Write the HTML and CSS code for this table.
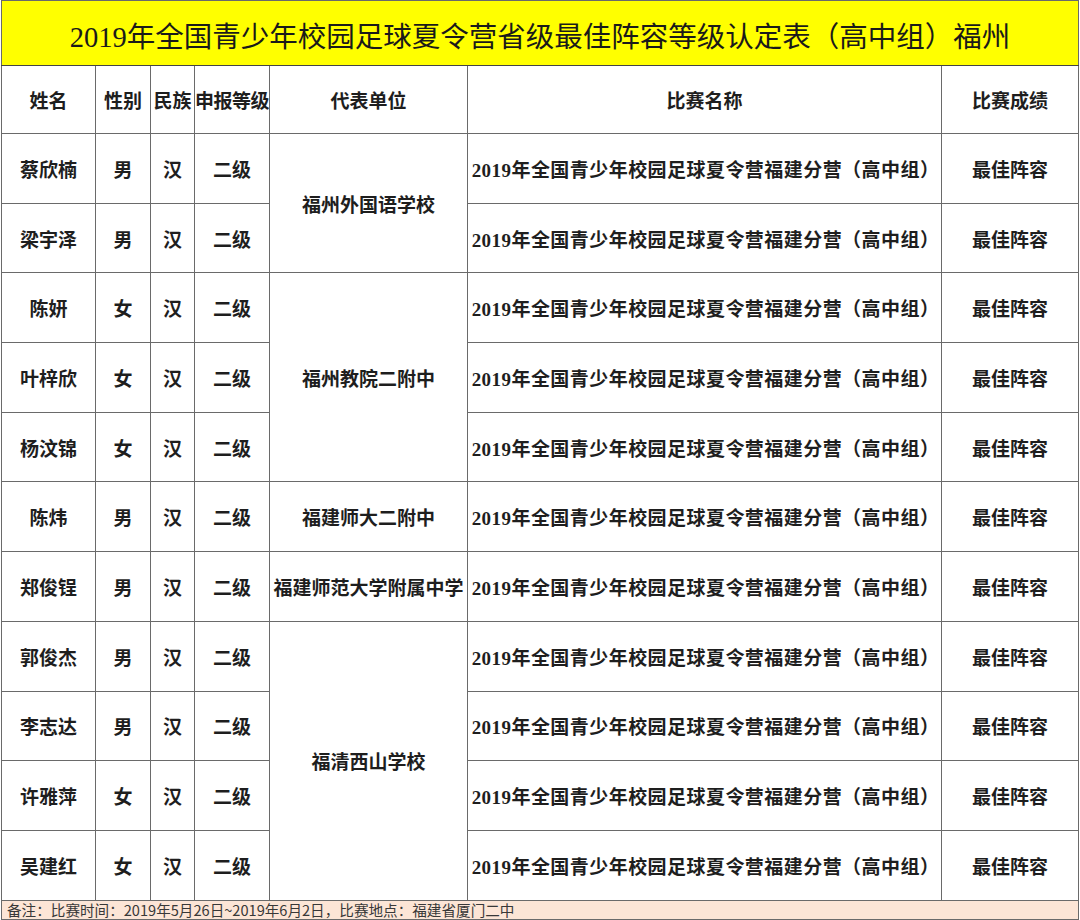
FILE: index.html
```html
<!DOCTYPE html>
<html lang="zh-CN">
<head>
<meta charset="utf-8">
<title>2019年全国青少年校园足球夏令营省级最佳阵容等级认定表（高中组）福州</title>
<link rel="stylesheet" href="styles.css">
</head>
<body>
<table class="sheet">
  <colgroup>
    <col class="c-name">
    <col class="c-sex">
    <col class="c-eth">
    <col class="c-lvl">
    <col class="c-unit">
    <col class="c-match">
    <col class="c-res">
  </colgroup>
  <tr class="title-row"><td colspan="7" class="title">2019年全国青少年校园足球夏令营省级最佳阵容等级认定表（高中组）福州</td></tr>
  <tr class="head-row">
    <th>姓名</th><th>性别</th><th>民族</th><th class="tight">申报等级</th><th>代表单位</th><th>比赛名称</th><th>比赛成绩</th>
  </tr>
  <tr class="row"><td>蔡欣楠</td><td>男</td><td>汉</td><td>二级</td><td rowspan="2" class="unit">福州外国语学校</td><td class="match">2019年全国青少年校园足球夏令营福建分营（高中组）</td><td>最佳阵容</td></tr>
  <tr class="row"><td>梁宇泽</td><td>男</td><td>汉</td><td>二级</td><td class="match">2019年全国青少年校园足球夏令营福建分营（高中组）</td><td>最佳阵容</td></tr>
  <tr class="row"><td>陈妍</td><td>女</td><td>汉</td><td>二级</td><td rowspan="3" class="unit">福州教院二附中</td><td class="match">2019年全国青少年校园足球夏令营福建分营（高中组）</td><td>最佳阵容</td></tr>
  <tr class="row"><td>叶梓欣</td><td>女</td><td>汉</td><td>二级</td><td class="match">2019年全国青少年校园足球夏令营福建分营（高中组）</td><td>最佳阵容</td></tr>
  <tr class="row"><td>杨汶锦</td><td>女</td><td>汉</td><td>二级</td><td class="match">2019年全国青少年校园足球夏令营福建分营（高中组）</td><td>最佳阵容</td></tr>
  <tr class="row"><td>陈炜</td><td>男</td><td>汉</td><td>二级</td><td class="unit">福建师大二附中</td><td class="match">2019年全国青少年校园足球夏令营福建分营（高中组）</td><td>最佳阵容</td></tr>
  <tr class="row"><td>郑俊锃</td><td>男</td><td>汉</td><td>二级</td><td class="unit">福建师范大学附属中学</td><td class="match">2019年全国青少年校园足球夏令营福建分营（高中组）</td><td>最佳阵容</td></tr>
  <tr class="row"><td>郭俊杰</td><td>男</td><td>汉</td><td>二级</td><td rowspan="4" class="unit">福清西山学校</td><td class="match">2019年全国青少年校园足球夏令营福建分营（高中组）</td><td>最佳阵容</td></tr>
  <tr class="row"><td>李志达</td><td>男</td><td>汉</td><td>二级</td><td class="match">2019年全国青少年校园足球夏令营福建分营（高中组）</td><td>最佳阵容</td></tr>
  <tr class="row"><td>许雅萍</td><td>女</td><td>汉</td><td>二级</td><td class="match">2019年全国青少年校园足球夏令营福建分营（高中组）</td><td>最佳阵容</td></tr>
  <tr class="row"><td>吴建红</td><td>女</td><td>汉</td><td>二级</td><td class="match">2019年全国青少年校园足球夏令营福建分营（高中组）</td><td>最佳阵容</td></tr>
  <tr class="foot-row"><td colspan="7" class="note">备注：比赛时间：2019年5月26日~2019年6月2日，比赛地点：福建省厦门二中</td></tr>
</table>
</body>
</html>
```

FILE: styles.css
```css
html, body {
  margin: 0;
  padding: 0;
  background: #ffffff;
}

.sheet {
  border-collapse: collapse;
  table-layout: fixed;
  width: 1078px;
  margin: 0 0 0 1px;
  font-family: "Liberation Serif", "Noto Sans CJK SC", serif;
  color: #1e1e1e;
  border: 1px solid #333;
}

.c-name { width: 94px; }
.c-sex { width: 55px; }
.c-eth { width: 44px; }
.c-lvl { width: 75px; }
.c-unit { width: 198px; }
.c-match { width: 474px; }
.c-res { width: 137px; }

.sheet td, .sheet th {
  border: 1px solid #6a6a6a;
  padding: 0;
  text-align: center;
  vertical-align: middle;
  font-size: 19px;
  font-weight: bold;
  white-space: nowrap;
  overflow: hidden;
}

.title-row td {
  height: 62px;
  background: #ffff00;
  font-size: 28.5px;
  font-weight: normal;
  color: #1a1a1a;
  border-bottom: 1px solid #444;
  padding-top: 2px;
}

.head-row th {
  height: 67px;
}

.row td {
  height: 68.7px;
}

.sheet .match {
  letter-spacing: 0.45px;
  padding-left: 2px;
}

.tight {
  letter-spacing: -0.5px;
}

.foot-row td {
  height: 18px;
  background: #fce5d6;
  text-align: left;
  font-size: 14.6px;
  font-weight: normal;
  color: #383838;
  padding-left: 5px;
  border-top: 1px solid #444;
  font-family: "Noto Sans CJK SC", "Liberation Serif", sans-serif;
  line-height: 18px;
}
```
